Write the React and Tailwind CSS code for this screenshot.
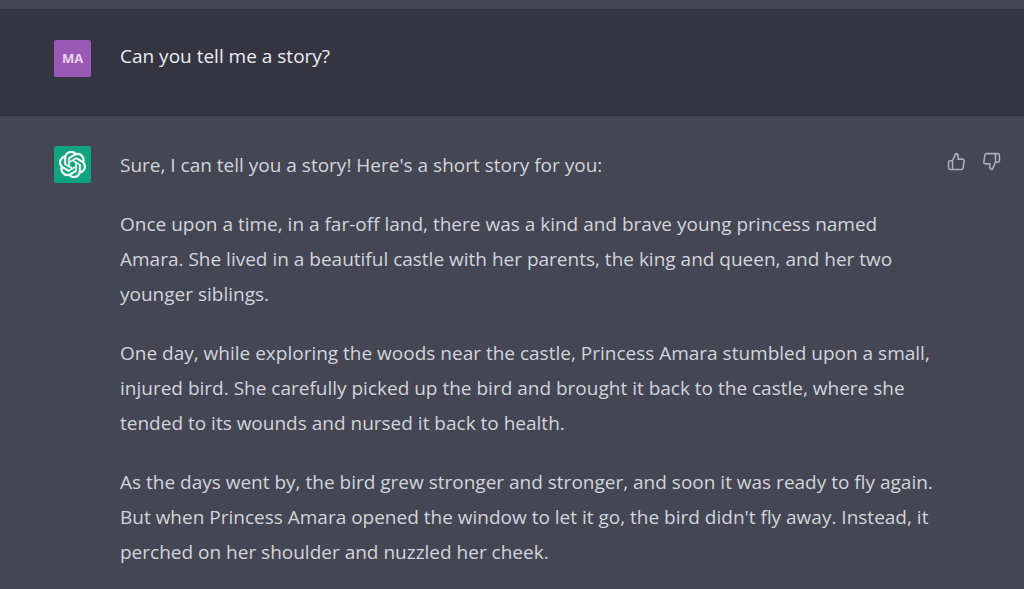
import { FiThumbsUp, FiThumbsDown } from 'react-icons/fi'
import { SiOpenai } from 'react-icons/si'

const story = [
  "Sure, I can tell you a story! Here's a short story for you:",
  'Once upon a time, in a far-off land, there was a kind and brave young princess named Amara. She lived in a beautiful castle with her parents, the king and queen, and her two younger siblings.',
  'One day, while exploring the woods near the castle, Princess Amara stumbled upon a small, injured bird. She carefully picked up the bird and brought it back to the castle, where she tended to its wounds and nursed it back to health.',
  "As the days went by, the bird grew stronger and stronger, and soon it was ready to fly again. But when Princess Amara opened the window to let it go, the bird didn't fly away. Instead, it perched on her shoulder and nuzzled her cheek.",
]

export default function App() {
  return (
    <main className="min-h-screen bg-[#444654] pt-[9px] font-['Open_Sans','Noto_Sans',sans-serif] text-[19px] leading-[35px]">
      <section className="flex items-start gap-[29px] border-y border-[#2f303b] bg-[#343541] pt-[29px] pr-[23px] pb-[38px] pl-[54px] text-[#ececf1]">
        <div className="mt-px flex size-[37px] shrink-0 items-center justify-center rounded-xs bg-[#9b59b6] text-[13px] font-bold text-[#e8d3f0]">
          MA
        </div>
        <p>Can you tell me a story?</p>
      </section>

      <section className="flex items-start pt-[30px] pr-[23px] pl-[54px] text-[#d1d5db]">
        <div className="mr-[29px] flex size-[37px] shrink-0 items-center justify-center rounded-xs bg-[#10a37f] text-white">
          <SiOpenai size={27} stroke="currentColor" strokeWidth={0.4} />
        </div>
        <div className="flex min-w-0 flex-1 flex-col gap-[24px] pt-[2px] pr-3">
          {story.map((text) => (
            <p key={text}>{text}</p>
          ))}
        </div>
        <div className="flex h-[30px] shrink-0 items-center gap-4 text-[#acacbe]">
          <button aria-label="Good response"><FiThumbsUp size={19} /></button>
          <button aria-label="Bad response"><FiThumbsDown size={19} /></button>
        </div>
      </section>
    </main>
  )
}
